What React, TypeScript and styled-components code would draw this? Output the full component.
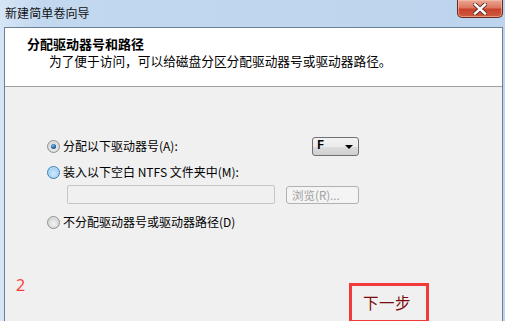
import React from "react";
import styled, { createGlobalStyle } from "styled-components";

const Global = createGlobalStyle`
  html, body { margin: 0; padding: 0; overflow: hidden; background: #b9d1ea; }
  body { font-family: "Noto Sans CJK SC", "Noto Sans", sans-serif; }
`;

const Window = styled.div`
  width: 505px;
  height: 321px;
  display: flex;
  flex-direction: column;
  overflow: hidden;
  background: linear-gradient(90deg, #d6e6f6 0px, #c2d8ef 40px, #bcd4ed 100%);
`;

const TitleBar = styled.div`
  height: 27px;
  display: flex;
  justify-content: space-between;
  align-items: flex-start;
  padding-left: 5px;
  box-sizing: border-box;
  flex-shrink: 0;
`;

const Title = styled.div`
  align-self: center;
  font-size: 12px;
  line-height: 16px;
  color: #111;
  letter-spacing: 0.1px;
  margin-top: -1px;
`;

const CloseButton = styled.div`
  width: 46px;
  height: 18px;
  margin-right: 2px;
  box-sizing: border-box;
  border: 1px solid #6a2a24;
  border-top: none;
  border-radius: 0 0 5px 5px;
  background: linear-gradient(#eaa893 0%, #dc7760 45%, #c8432d 55%, #cf5a3e 100%);
  box-shadow: inset 0 0 0 1px rgba(255, 200, 180, 0.55);
  display: flex;
  align-items: center;
  justify-content: center;
`;

const Client = styled.div`
  flex: 1;
  margin: 0 2px 0 4px;
  border: 1px solid #6c7f96;
  border-bottom: none;
  background: #f0f0f0;
  display: flex;
  flex-direction: column;
  min-height: 0;
`;

const Header = styled.div`
  height: 59px;
  box-sizing: border-box;
  flex-shrink: 0;
  background: #fff;
  border-bottom: 1px solid #a0a0a0;
  padding: 8px 0 0 22px;
`;

const HeaderTitle = styled.div`
  font-size: 13px;
  font-weight: 700;
  line-height: 16px;
  color: #000;
`;

const HeaderSub = styled.div`
  font-size: 12.7px;
  line-height: 16px;
  margin: 1px 0 0 22px;
  color: #000;
`;

const Body = styled.div`
  padding: 49px 143px 0 42px;
  display: flex;
  flex-direction: column;
`;

const Row = styled.div<{ $mt?: number }>`
  height: 20px;
  margin-top: ${(p) => p.$mt ?? 0}px;
  display: flex;
  align-items: center;
`;

const Radio = styled.span<{ $state: "checked" | "hover" | "normal" }>`
  width: 13px;
  height: 13px;
  box-sizing: border-box;
  border-radius: 50%;
  border: 1px solid ${(p) => (p.$state === "hover" ? "#3c7fb1" : "#8e8f8f")};
  background: ${(p) =>
    p.$state === "hover"
      ? "radial-gradient(circle at 50% 60%, #cfeaff 0%, #a6d4f5 60%, #e8f5ff 100%)"
      : "radial-gradient(circle at 50% 60%, #f4f4f4 0%, #d9d9d9 60%, #f8f8f8 100%)"};
  display: flex;
  align-items: center;
  justify-content: center;
  flex-shrink: 0;
  &::after {
    content: "";
    display: ${(p) => (p.$state === "checked" ? "block" : "none")};
    width: 5px;
    height: 5px;
    border-radius: 50%;
    background: radial-gradient(circle at 40% 35%, #7ab6e8 0%, #1b5a9b 60%, #0d3a6e 100%);
  }
`;

const Label = styled.span`
  margin-left: 3px;
  font-size: 12px;
  line-height: 16px;
  color: #000;
  white-space: nowrap;
`;

const Select = styled.div`
  margin-left: auto;
  width: 47px;
  height: 19px;
  box-sizing: border-box;
  border: 1px solid #707070;
  border-radius: 3px;
  background: linear-gradient(#f2f2f2 0%, #ebebeb 50%, #dddddd 51%, #cfcfcf 100%);
  display: flex;
  align-items: center;
  justify-content: space-between;
  padding: 0 5px 0 4px;
`;

const SelectValue = styled.span`
  font-family: "Liberation Mono", "DejaVu Sans Mono", monospace;
  font-size: 12px;
  font-weight: 700;
  color: #000;
`;

const Arrow = styled.span`
  width: 0;
  height: 0;
  border-left: 4px solid transparent;
  border-right: 4px solid transparent;
  border-top: 4px solid #000;
  margin-top: 1px;
`;

const PathRow = styled.div`
  height: 19px;
  margin-top: 3px;
  padding-left: 20px;
  display: flex;
  align-items: center;
`;

const TextBox = styled.div`
  width: 208px;
  height: 19px;
  box-sizing: border-box;
  border: 1px solid #c6c6c6;
  border-radius: 2px;
  background: #f0f0f0;
`;

const BrowseButton = styled.div`
  margin-left: 11px;
  width: 73px;
  height: 18px;
  box-sizing: border-box;
  border: 1px solid #adb2b5;
  border-radius: 3px;
  background: #f4f4f4;
  font-size: 11.5px;
  line-height: 16px;
  color: #a0a0a0;
  padding-left: 5px;
  white-space: nowrap;
`;

const Footer = styled.div`
  margin-top: 44px;
  padding: 0 73px 0 11px;
  display: flex;
  align-items: flex-start;
  justify-content: space-between;
`;

const StepNumber = styled.span`
  font-family: "Noto Sans", "Liberation Sans", sans-serif;
  font-size: 16px;
  line-height: 18px;
  color: #ff3b3b;
`;

const Highlight = styled.div`
  margin-top: 7px;
  width: 80px;
  height: 40px;
  box-sizing: border-box;
  border: 3px solid #f23a3a;
  display: flex;
  justify-content: center;
  padding: 6px 4px 0 0;
`;

const NextText = styled.span`
  font-size: 15.5px;
  line-height: 20px;
  color: #7a0a0a;
  letter-spacing: 0.5px;
`;

export default function App() {
  return (
    <>
      <Global />
      <Window>
        <TitleBar>
          <Title>新建简单卷向导</Title>
          <CloseButton>
            <svg width="14" height="12" viewBox="0 0 14 12">
              <path
                d="M2 1.5 L12 10.5 M12 1.5 L2 10.5"
                stroke="#5a2a26"
                strokeWidth="4.2"
                strokeLinecap="square"
              />
              <path
                d="M2 1.5 L12 10.5 M12 1.5 L2 10.5"
                stroke="#ffffff"
                strokeWidth="2.4"
                strokeLinecap="square"
              />
            </svg>
          </CloseButton>
        </TitleBar>
        <Client>
          <Header>
            <HeaderTitle>分配驱动器号和路径</HeaderTitle>
            <HeaderSub>为了便于访问，可以给磁盘分区分配驱动器号或驱动器路径。</HeaderSub>
          </Header>
          <Body>
            <Row>
              <Radio $state="checked" />
              <Label>分配以下驱动器号(A):</Label>
              <Select>
                <SelectValue>F</SelectValue>
                <Arrow />
              </Select>
            </Row>
            <Row $mt={6}>
              <Radio $state="hover" />
              <Label>装入以下空白 NTFS 文件夹中(M):</Label>
            </Row>
            <PathRow>
              <TextBox />
              <BrowseButton>浏览(R)...</BrowseButton>
            </PathRow>
            <Row $mt={8}>
              <Radio $state="normal" />
              <Label>不分配驱动器号或驱动器路径(D)</Label>
            </Row>
          </Body>
          <Footer>
            <StepNumber>2</StepNumber>
            <Highlight>
              <NextText>下一步</NextText>
            </Highlight>
          </Footer>
        </Client>
      </Window>
    </>
  );
}
